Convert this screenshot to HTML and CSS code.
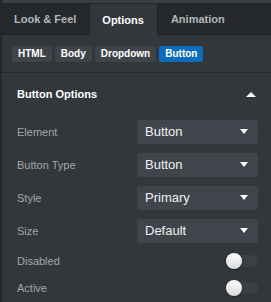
FILE: index.html
```html
<!DOCTYPE html>
<html lang="en">
<head>
    <meta charset="UTF-8">
    <title>Button Options</title>
    <link rel="stylesheet" href="styles.css">
</head>
<body>
    <div class="panel">
        <nav class="tabs">
            <a href="#" class="tab">Look &amp; Feel</a>
            <a href="#" class="tab active">Options</a>
            <a href="#" class="tab">Animation</a>
        </nav>
        <div class="pills">
            <span class="pill">HTML</span>
            <span class="pill">Body</span>
            <span class="pill">Dropdown</span>
            <span class="pill selected">Button</span>
        </div>
        <div class="section-head">
            <span>Button Options</span>
            <span class="caret-up"></span>
        </div>
        <div class="row">
            <label>Element</label>
            <div class="select"><span>Button</span><span class="caret-down"></span></div>
        </div>
        <div class="row">
            <label>Button Type</label>
            <div class="select"><span>Button</span><span class="caret-down"></span></div>
        </div>
        <div class="row">
            <label>Style</label>
            <div class="select"><span>Primary</span><span class="caret-down"></span></div>
        </div>
        <div class="row">
            <label>Size</label>
            <div class="select"><span>Default</span><span class="caret-down"></span></div>
        </div>
        <div class="row toggle-row">
            <label>Disabled</label>
            <div class="toggle"><span class="knob"></span></div>
        </div>
        <div class="row toggle-row">
            <label>Active</label>
            <div class="toggle"><span class="knob"></span></div>
        </div>
    </div>
</body>
</html>
```

FILE: styles.css
```css
html {
    background-color: #32373b;
}
body {
    margin: 0;
    font-family: "Liberation Sans", Arial, sans-serif;
}
.panel {
    width: 271px;
    height: 302px;
    box-sizing: border-box;
    border-left: 2px solid #26292c;
    background-color: #32373b;
    overflow: hidden;
}
.tabs {
    display: flex;
    height: 35px;
    box-sizing: border-box;
    border-top: 3px solid #3a3e42;
    padding-top: 1px;
    background-color: #26292c;
    border-bottom: 1px solid #1f2225;
}
.tab {
    display: flex;
    align-items: center;
    padding: 0 12px;
    color: #b3b7bb;
    font-size: 11px;
    font-weight: bold;
    text-decoration: none;
    border-right: 1px solid #1f2225;
}
.tab:first-child {
    padding-right: 13px;
}
.tab.active {
    background-color: #32373b;
    color: #ffffff;
    padding: 0 13px 0 12px;
    margin-bottom: -1px;
}
.tab:last-child {
    border-right: none;
    padding-left: 13px;
}
.pills {
    display: flex;
    gap: 3px;
    padding: 11px 10px 10px 10px;
    border-bottom: 1px solid #25282b;
}
.pill {
    height: 16px;
    line-height: 16px;
    padding: 0 6px;
    border-radius: 2px;
    background-color: #3f444a;
    color: #ffffff;
    font-size: 10px;
    font-weight: bold;
}
.pill.selected {
    background-color: #0c6dbc;
}
.section-head {
    display: flex;
    align-items: center;
    justify-content: space-between;
    height: 42px;
    padding: 0 15px 0 15px;
    color: #ffffff;
    font-size: 11px;
    font-weight: bold;
}
.caret-up {
    width: 0;
    height: 0;
    border-left: 5px solid transparent;
    border-right: 5px solid transparent;
    border-bottom: 5px solid #ffffff;
}
.row {
    display: flex;
    align-items: center;
    height: 33px;
    padding: 0 13px 0 15px;
}
.row label {
    flex: 1;
    color: #a3a7ab;
    font-size: 11px;
}
.select {
    display: flex;
    align-items: center;
    justify-content: space-between;
    width: 121px;
    height: 24px;
    box-sizing: border-box;
    padding: 0 10px 0 8px;
    border-radius: 3px;
    background-color: #40454c;
    color: #eef0f2;
    font-size: 13px;
}
.caret-down {
    width: 0;
    height: 0;
    border-left: 4px solid transparent;
    border-right: 4px solid transparent;
    border-top: 5px solid #ffffff;
}
.toggle-row {
    height: 27px;
}
.toggle {
    position: relative;
    width: 32px;
    height: 12px;
    border-radius: 6px;
    background-color: #3b4046;
}
.knob {
    position: absolute;
    left: 0;
    top: -2px;
    width: 16px;
    height: 16px;
    border-radius: 50%;
    background: linear-gradient(#ffffff, #d9d9d9);
    box-shadow: 0 1px 2px rgba(0, 0, 0, 0.4);
}
```
